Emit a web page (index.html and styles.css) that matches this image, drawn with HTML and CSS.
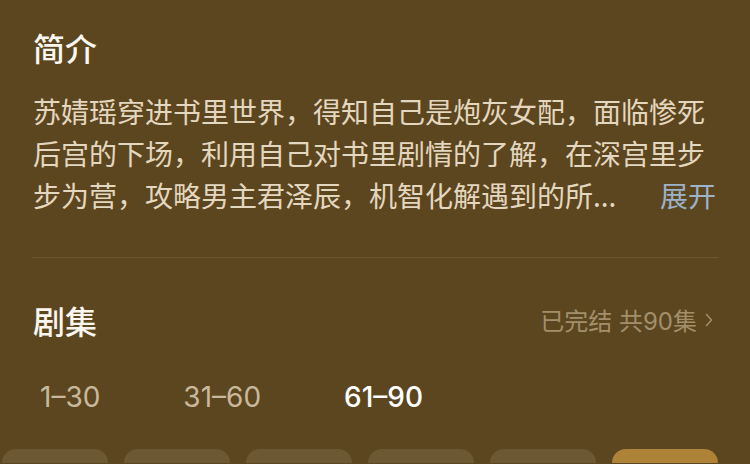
FILE: index.html
```html
<!DOCTYPE html>
<html lang="zh-CN">
<head>
<meta charset="utf-8">
<title>简介</title>
<link rel="stylesheet" href="styles.css">
</head>
<body>
<main class="page">
  <section class="intro">
    <h2 class="section-title">简介</h2>
    <div class="intro-text">
      <span class="expand">展开</span>
      <p class="intro-body">苏婧瑶穿进书里世界，得知自己是炮灰女配，面临惨死后宫的下场，利用自己对书里剧情的了解，在深宫里步步为营，攻略男主君泽辰，机智化解遇到的所...</p>
    </div>
  </section>
  <hr class="divider">
  <section class="episodes">
    <div class="episodes-head">
      <h2 class="section-title">剧集</h2>
      <a class="episodes-meta">已完结 共90集<svg class="chevron" viewBox="0 0 8 14" width="8" height="14"><path d="M1.5 1.5 L6.5 7 L1.5 12.5" fill="none" stroke="currentColor" stroke-width="1.5" stroke-linecap="round" stroke-linejoin="round"/></svg></a>
    </div>
    <nav class="ranges">
      <span class="range">1–30</span>
      <span class="range">31–60</span>
      <span class="range active">61–90</span>
    </nav>
    <div class="tiles">
      <div class="tile"></div>
      <div class="tile"></div>
      <div class="tile"></div>
      <div class="tile"></div>
      <div class="tile"></div>
      <div class="tile current"></div>
    </div>
  </section>
</main>
</body>
</html>
```
FILE: styles.css
```css
html, body {
  margin: 0;
  padding: 0;
}

body {
  width: 750px;
  height: 464px;
  overflow: hidden;
  background: #5c461f;
  font-family: Inter, "Noto Sans CJK SC", sans-serif;
  color: #fff;
}

.page {
  padding: 31px 32px 0 33px;
}

.section-title {
  margin: 0;
  font-size: 32px;
  line-height: 32px;
  font-weight: 500;
  color: #fbf7ef;
  font-family: "Noto Sans CJK SC", sans-serif;
}

/* three-line summary; the expand link sits at the end of the last line */
.intro-text {
  margin-top: 27px;
  position: relative;
  font-family: "Noto Sans CJK SC", sans-serif;
  font-size: 28px;
  line-height: 42px;
  color: #e4d7bf;
}

.intro-body {
  margin: 0;
  padding-right: 0;
}

.expand {
  position: absolute;
  right: 2px;
  bottom: 0;
  color: #9db3c9;
}

.divider {
  margin: 41px 0 0 -1px;
  border: 0;
  height: 1px;
  background: rgba(255, 255, 255, 0.09);
}

.episodes-head {
  margin-top: 44px;
  display: flex;
  justify-content: space-between;
  align-items: center;
}

.episodes-meta {
  display: flex;
  align-items: center;
  gap: 6px;
  font-family: Inter, "Noto Sans CJK SC", sans-serif;
  font-size: 24px;
  color: #a38f6c;
  padding-right: 5px;
}

.chevron {
  margin-left: 2px;
}

.ranges {
  margin-top: 40px;
  display: flex;
  gap: 83px;
  padding-left: 7px;
}

.range {
  font-size: 28px;
  line-height: 40px;
  color: #c9b99c;
}

.range.active {
  color: #fff;
  font-weight: 500;
}

.tiles {
  margin: 32px -32px 0 -31px;
  display: flex;
  gap: 16px;
}

.tile {
  flex: 0 0 106px;
  height: 14px;
  border-radius: 14px 14px 0 0;
  background: #6d5834;
}

.tile.current {
  background: #ae8237;
}
```
